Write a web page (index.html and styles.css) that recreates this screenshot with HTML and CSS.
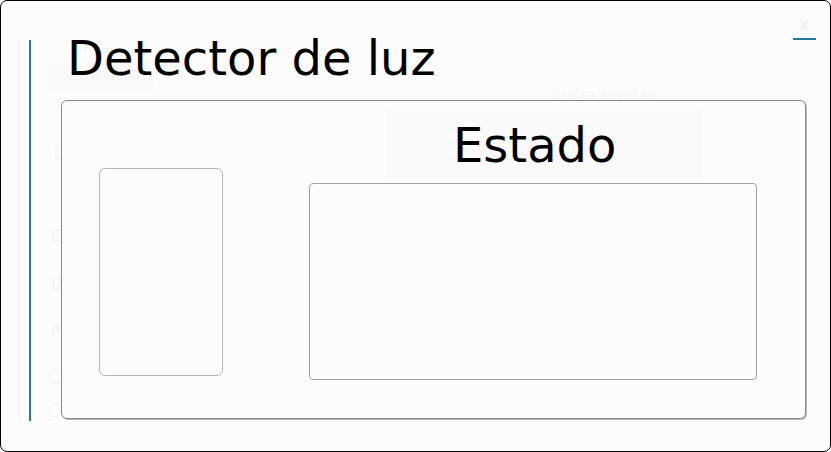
FILE: index.html
```html
<!DOCTYPE html>
<html lang="es">
<head>
<meta charset="utf-8">
<title>Detector de luz</title>
<link rel="stylesheet" href="styles.css">
</head>
<body>
<div class="window">
  <div class="page">
    <div class="top-row">
      <div class="ghost-btn">Conectar</div>
      <div class="ghost-chart">Gráfica de voltaje</div>
    </div>
    <div class="ghost-label g1">D</div>
    <div class="ghost-label g2">Es</div>
    <div class="ghost-label g3">D</div>
    <div class="ghost-label g4">P</div>
    <div class="ghost-check c1"></div>
    <div class="ghost-check c2"></div>
  </div>

  <div class="dialog">
    <div class="dialog-top">
      <div class="close">X</div>
    </div>
    <div class="dialog-body">
      <h1 class="title">Detector de luz</h1>
      <div class="group">
        <div class="left-box"></div>
        <div class="right-col">
          <div class="status-head">Estado</div>
          <div class="status-box"></div>
        </div>
      </div>
    </div>
  </div>
</div>
</body>
</html>
```

FILE: styles.css
```css
html, body {
  margin: 0;
  padding: 0;
  background: #ffffff;
}

.window {
  position: relative;
  width: 831px;
  height: 452px;
  box-sizing: border-box;
  border: 1px solid #000;
  border-radius: 7px;
  background: #fcfcfc;
  overflow: hidden;
  font-family: "DejaVu Sans", sans-serif;
}

/* faint page behind the dialog */
.page {
  display: flex;
  flex-direction: column;
  align-items: flex-start;
  padding: 57px 0 0 47px;
  font-family: "Open Sans", sans-serif;
  color: #f3f3f3;
}

.top-row {
  display: flex;
}

.ghost-btn {
  width: 105px;
  height: 34px;
  box-sizing: border-box;
  padding-left: 19px;
  line-height: 32px;
  font-size: 15px;
  background: #fafafa;
}

.ghost-chart {
  margin-left: 399px;
  margin-top: 28px;
  font-size: 13px;
  line-height: 16px;
}

.ghost-label {
  font-size: 16px;
  line-height: 20px;
  padding-left: 3px;
}

.g1 { margin-top: 41px; padding-left: 6px; }
.g2 { margin-top: 62px; }
.g3 { margin-top: 28px; }
.g4 { margin-top: 27px; }

.ghost-check {
  width: 12px;
  height: 12px;
  border: 1px solid #f3f3f3;
  border-radius: 2px;
  margin-left: 1px;
}
.c1 { margin-top: 30px; }
.c2 { margin-top: 19px; }

/* dialog overlay */
.dialog {
  position: absolute;
  inset: 0;
  display: flex;
  flex-direction: column;
}

.dialog-top {
  height: 39px;
  display: flex;
  justify-content: flex-end;
  align-items: flex-end;
  padding-right: 14px;
}

.close {
  width: 23px;
  height: 28px;
  border-bottom: 2px solid #2179a0;
  text-align: center;
  font-family: "Open Sans", sans-serif;
  font-size: 15px;
  line-height: 28px;
  color: #ececec;
  background: #fbfbfb;
}

.dialog-body {
  margin-left: 28px;
  height: 381px;
  border-left: 2px solid #2179a0;
  padding-left: 30px;
  display: flex;
  flex-direction: column;
  align-items: flex-start;
}

.title {
  margin: -6px 0 0 6px;
  font-family: "DejaVu Sans", sans-serif;
  font-weight: normal;
  font-size: 48px;
  line-height: 48px;
  color: #000;
}

.group {
  margin-top: 18px;
  width: 745px;
  height: 319px;
  box-sizing: border-box;
  border: 1px solid #8a8a8a;
  box-shadow: 1px 1px 0 #b5b5b5;
  border-radius: 6px;
  background: #fcfcfc;
  display: flex;
  align-items: flex-start;
  padding-left: 37px;
}

.left-box {
  margin-top: 67px;
  width: 124px;
  height: 208px;
  box-sizing: border-box;
  border: 1px solid #b6b6b6;
  border-radius: 6px;
}

.right-col {
  margin-left: 86px;
  display: flex;
  flex-direction: column;
  align-items: flex-start;
}

.status-head {
  margin-top: 9px;
  margin-left: 78px;
  width: 316px;
  height: 70px;
  box-sizing: border-box;
  padding-left: 66px;
  background: #fafafa;
  font-family: "DejaVu Sans", sans-serif;
  font-size: 48px;
  line-height: 70px;
  color: #000;
}

.status-box {
  margin-top: 3px;
  width: 448px;
  height: 197px;
  box-sizing: border-box;
  border: 1px solid #a2a2a2;
  border-radius: 4px;
}
```
